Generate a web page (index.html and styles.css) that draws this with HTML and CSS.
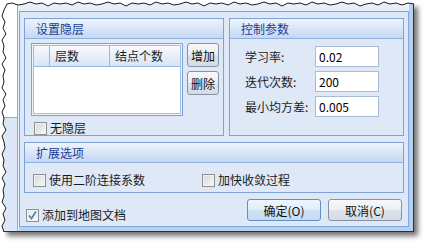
FILE: index.html
```html
<!DOCTYPE html>
<html lang="zh-CN">
<head>
    <meta charset="UTF-8">
    <meta name="viewport" content="width=device-width, initial-scale=1.0">
    <title>BP 神经网络参数</title>
    <link rel="stylesheet" href="styles.css">
</head>
<body>
    <div class="shot">
        <div class="side">
            <div class="side-top"></div>
            <div class="side-bottom"></div>
        </div>
        <div class="window-wrap">
            <div class="window">
                <div class="row-top">
                    <div class="group group-layers">
                        <div class="group-title">设置隐层</div>
                        <div class="group-body">
                            <div class="layer-edit">
                                <div class="grid">
                                    <div class="grid-inner">
                                        <div class="grid-head">
                                            <span class="col-mark"></span>
                                            <span class="col-layer">层数</span>
                                            <span class="col-nodes">结点个数</span>
                                        </div>
                                    </div>
                                </div>
                                <div class="side-buttons">
                                    <button class="btn btn-small">增加</button>
                                    <button class="btn btn-small">删除</button>
                                </div>
                            </div>
                            <label class="check check-nolayer"><span class="box"></span>无隐层</label>
                        </div>
                    </div>

                    <div class="group group-params">
                        <div class="group-title">控制参数</div>
                        <div class="group-body params">
                            <span class="param-label">学习率:</span>
                            <input class="field" type="text" value="0.02" readonly>
                            <span class="param-label">迭代次数:</span>
                            <input class="field" type="text" value="200" readonly>
                            <span class="param-label">最小均方差:</span>
                            <input class="field" type="text" value="0.005" readonly>
                        </div>
                    </div>
                </div>

                <div class="group group-ext">
                    <div class="group-title">扩展选项</div>
                    <div class="group-body ext">
                        <label class="check check-wide"><span class="box"></span>使用二阶连接系数</label>
                        <label class="check"><span class="box"></span>加快收敛过程</label>
                    </div>
                </div>

                <div class="footer">
                    <label class="check check-map">
                        <span class="box checked">
                            <svg width="11" height="11" viewBox="0 0 11 11"><path d="M2 5.5 L4.5 8.5 L9 1.5" fill="none" stroke="#5d7fae" stroke-width="1.8"/></svg>
                        </span>添加到地图文档
                    </label>
                    <div class="footer-buttons">
                        <button class="btn btn-wide btn-default">确定(O)</button>
                        <button class="btn btn-wide">取消(C)</button>
                    </div>
                </div>
            </div>
        </div>
    </div>

    <!-- torn paper edge along the top and the left of the screenshot -->
    <svg class="torn" width="430" height="243" viewBox="0 0 430 243">
        <polygon fill="#fff" points="0,0 417,0 417,4 414,4 408,3 402,5 396,3 390,4 384,2 378,5 372,3 366,4 360,6 354,3 348,4 342,2 336,4 330,5 324,3 318,4 312,2 306,5 300,3 294,4 288,3 282,6 276,3 270,4 264,2 258,4 252,5 246,3 240,4 234,2 228,5 222,3 216,4 210,3 204,6 198,3 192,4 186,2 180,4 174,5 168,3 162,4 156,2 150,5 144,3 138,4 132,3 126,6 120,3 114,4 108,2 102,4 96,5 90,3 84,4 78,2 72,5 66,3 60,4 54,3 48,6 42,3 36,4 30,2 24,4 18,5 12,3 7,4 4,10 2,16 5,22 3,28 6,34 2,40 4,46 3,52 6,58 2,64 5,70 3,76 4,82 2,88 6,94 3,100 5,106 2,112 4,118 3,124 6,130 2,136 4,142 5,148 2,154 4,160 3,166 6,172 2,178 5,184 3,190 4,196 2,202 6,208 3,214 5,220 2,226 4,232 4,236 0,236"/>
        <polyline fill="none" stroke="#1c1c1c" stroke-width="1" points="414,4 408,3 402,5 396,3 390,4 384,2 378,5 372,3 366,4 360,6 354,3 348,4 342,2 336,4 330,5 324,3 318,4 312,2 306,5 300,3 294,4 288,3 282,6 276,3 270,4 264,2 258,4 252,5 246,3 240,4 234,2 228,5 222,3 216,4 210,3 204,6 198,3 192,4 186,2 180,4 174,5 168,3 162,4 156,2 150,5 144,3 138,4 132,3 126,6 120,3 114,4 108,2 102,4 96,5 90,3 84,4 78,2 72,5 66,3 60,4 54,3 48,6 42,3 36,4 30,2 24,4 18,5 12,3 7,4 4,10 2,16 5,22 3,28 6,34 2,40 4,46 3,52 6,58 2,64 5,70 3,76 4,82 2,88 6,94 3,100 5,106 2,112 4,118 3,124 6,130 2,136 4,142 5,148 2,154 4,160 3,166 6,172 2,178 5,184 3,190 4,196 2,202 6,208 3,214 5,220 2,226 4,232"/>
    </svg>
</body>
</html>
```

FILE: styles.css
```css
* {
    box-sizing: border-box;
}

body {
    margin: 0;
    width: 430px;
    height: 243px;
    overflow: hidden;
    position: relative;
    background-color: #fff;
    font-family: "Noto Sans CJK SC", "Noto Sans", sans-serif;
    font-size: 12px;
    color: #1b1b1b;
}

/* screenshot frame */
.shot {
    display: flex;
    margin: 3px 0 0 3px;
    width: 411px;
    height: 229px;
    background-color: #e6eef9;
    border-right: 1px solid #2f2f2f;
    border-bottom: 1px solid #2f2f2f;
    box-shadow: 4px 4px 5px rgba(0, 0, 0, 0.55);
}

.side {
    width: 15px;
    display: flex;
    flex-direction: column;
    border-right: 1px solid #8aaedc;
}

.side-top {
    height: 115px;
    background-color: #fff;
    border-bottom: 1px solid #8aaedc;
}

.side-bottom {
    flex: 1;
    background-color: #dce8f7;
}

.window-wrap {
    flex: 1;
    display: flex;
    margin-left: 1px;
    padding-top: 8px;
    border-right: 4px solid #b8d0ef;
    border-bottom: 4px solid #b8d0ef;
}

.window {
    flex: 1;
    display: flex;
    flex-direction: column;
    padding: 6px 4px 4px;
    background-color: #dee8f6;
    border: 1px solid #7fa5da;
}

/* group boxes */
.row-top {
    display: flex;
    gap: 5px;
    height: 118px;
}

.group {
    display: flex;
    flex-direction: column;
    border: 1px solid #7da2d8;
}

.group-layers {
    width: 200px;
}

.group-params {
    flex: 1;
}

.group-title {
    height: 20px;
    line-height: 19px;
    padding-left: 11px;
    color: #1b3f8f;
    background: linear-gradient(#eef4fc, #c3d8f4);
    border-bottom: 1px solid #8fb0de;
}

.group-body {
    flex: 1;
}

.group-layers .group-body {
    padding: 4px 0 0 6px;
}

.layer-edit {
    display: flex;
    gap: 4px;
}

.grid {
    width: 152px;
    height: 73px;
    padding: 1px;
    background-color: #eef3fa;
    border: 1px solid #7da2d8;
}

.grid-inner {
    height: 100%;
    background-color: #fff;
    border: 1px solid #a5bfe3;
}

.grid-head {
    display: flex;
    height: 21px;
    background: linear-gradient(#f7fafe, #d7e5f7);
    border-bottom: 1px solid #9ab6de;
}

.grid-head span {
    line-height: 20px;
    padding-left: 5px;
    border-right: 1px solid #9ab6de;
}

.grid-head .col-mark {
    width: 16px;
    padding: 0;
}

.grid-head .col-layer {
    width: 60px;
}

.grid-head .col-nodes {
    flex: 1;
    border-right: none;
}

.side-buttons {
    display: flex;
    flex-direction: column;
    gap: 4px;
}

/* buttons */
.btn {
    font: inherit;
    color: #111;
    padding: 0;
    border: 1px solid #8592a6;
    border-radius: 3px;
    background: linear-gradient(#f6f8fa, #eceff3 50%, #dde3ea 51%, #d5dce4);
}

.btn-small {
    width: 32px;
    height: 24px;
}

.btn-wide {
    width: 74px;
    height: 22px;
}

.btn-default {
    border-color: #5f8fc6;
    background: linear-gradient(#edf5fd, #e0edfa 50%, #cfe2f6 51%, #c4dbf2);
}

/* checkboxes */
.check {
    display: flex;
    align-items: center;
    gap: 3px;
    line-height: 14px;
}

.box {
    width: 13px;
    height: 13px;
    flex: none;
    display: flex;
    align-items: center;
    justify-content: center;
    border: 1px solid #8e8f8f;
    background: linear-gradient(135deg, #d4d6d9, #f9f9f9);
    box-shadow: inset 0 0 0 1px #f2f2f2;
}

.box.checked {
    background: linear-gradient(135deg, #e3e6ea, #fbfbfb);
}

.check-nolayer {
    margin: 5px 0 0 3px;
}

/* parameter fields */
.params {
    display: grid;
    grid-template-columns: 70px 64px;
    grid-auto-rows: 21px;
    row-gap: 4px;
    align-items: center;
    padding: 7px 0 0 15px;
}

.field {
    width: 64px;
    height: 21px;
    padding: 0 3px;
    font: inherit;
    color: #000;
    background-color: #fff;
    border: 1px solid #a9bbd6;
    outline: none;
}

/* extension options */
.group-ext {
    height: 51px;
    margin-top: 6px;
}

.ext {
    display: flex;
    align-items: flex-start;
    padding: 10px 0 0 8px;
}

.check-wide {
    width: 169px;
}

/* bottom row */
.footer {
    flex: 1;
    display: flex;
    align-items: flex-start;
    padding-top: 6px;
}

.check-map {
    margin: 9px 0 0 2px;
}

.footer-buttons {
    display: flex;
    gap: 7px;
    margin-left: auto;
    margin-right: 2px;
}

.torn {
    position: absolute;
    top: 0;
    left: 0;
    pointer-events: none;
}
```
